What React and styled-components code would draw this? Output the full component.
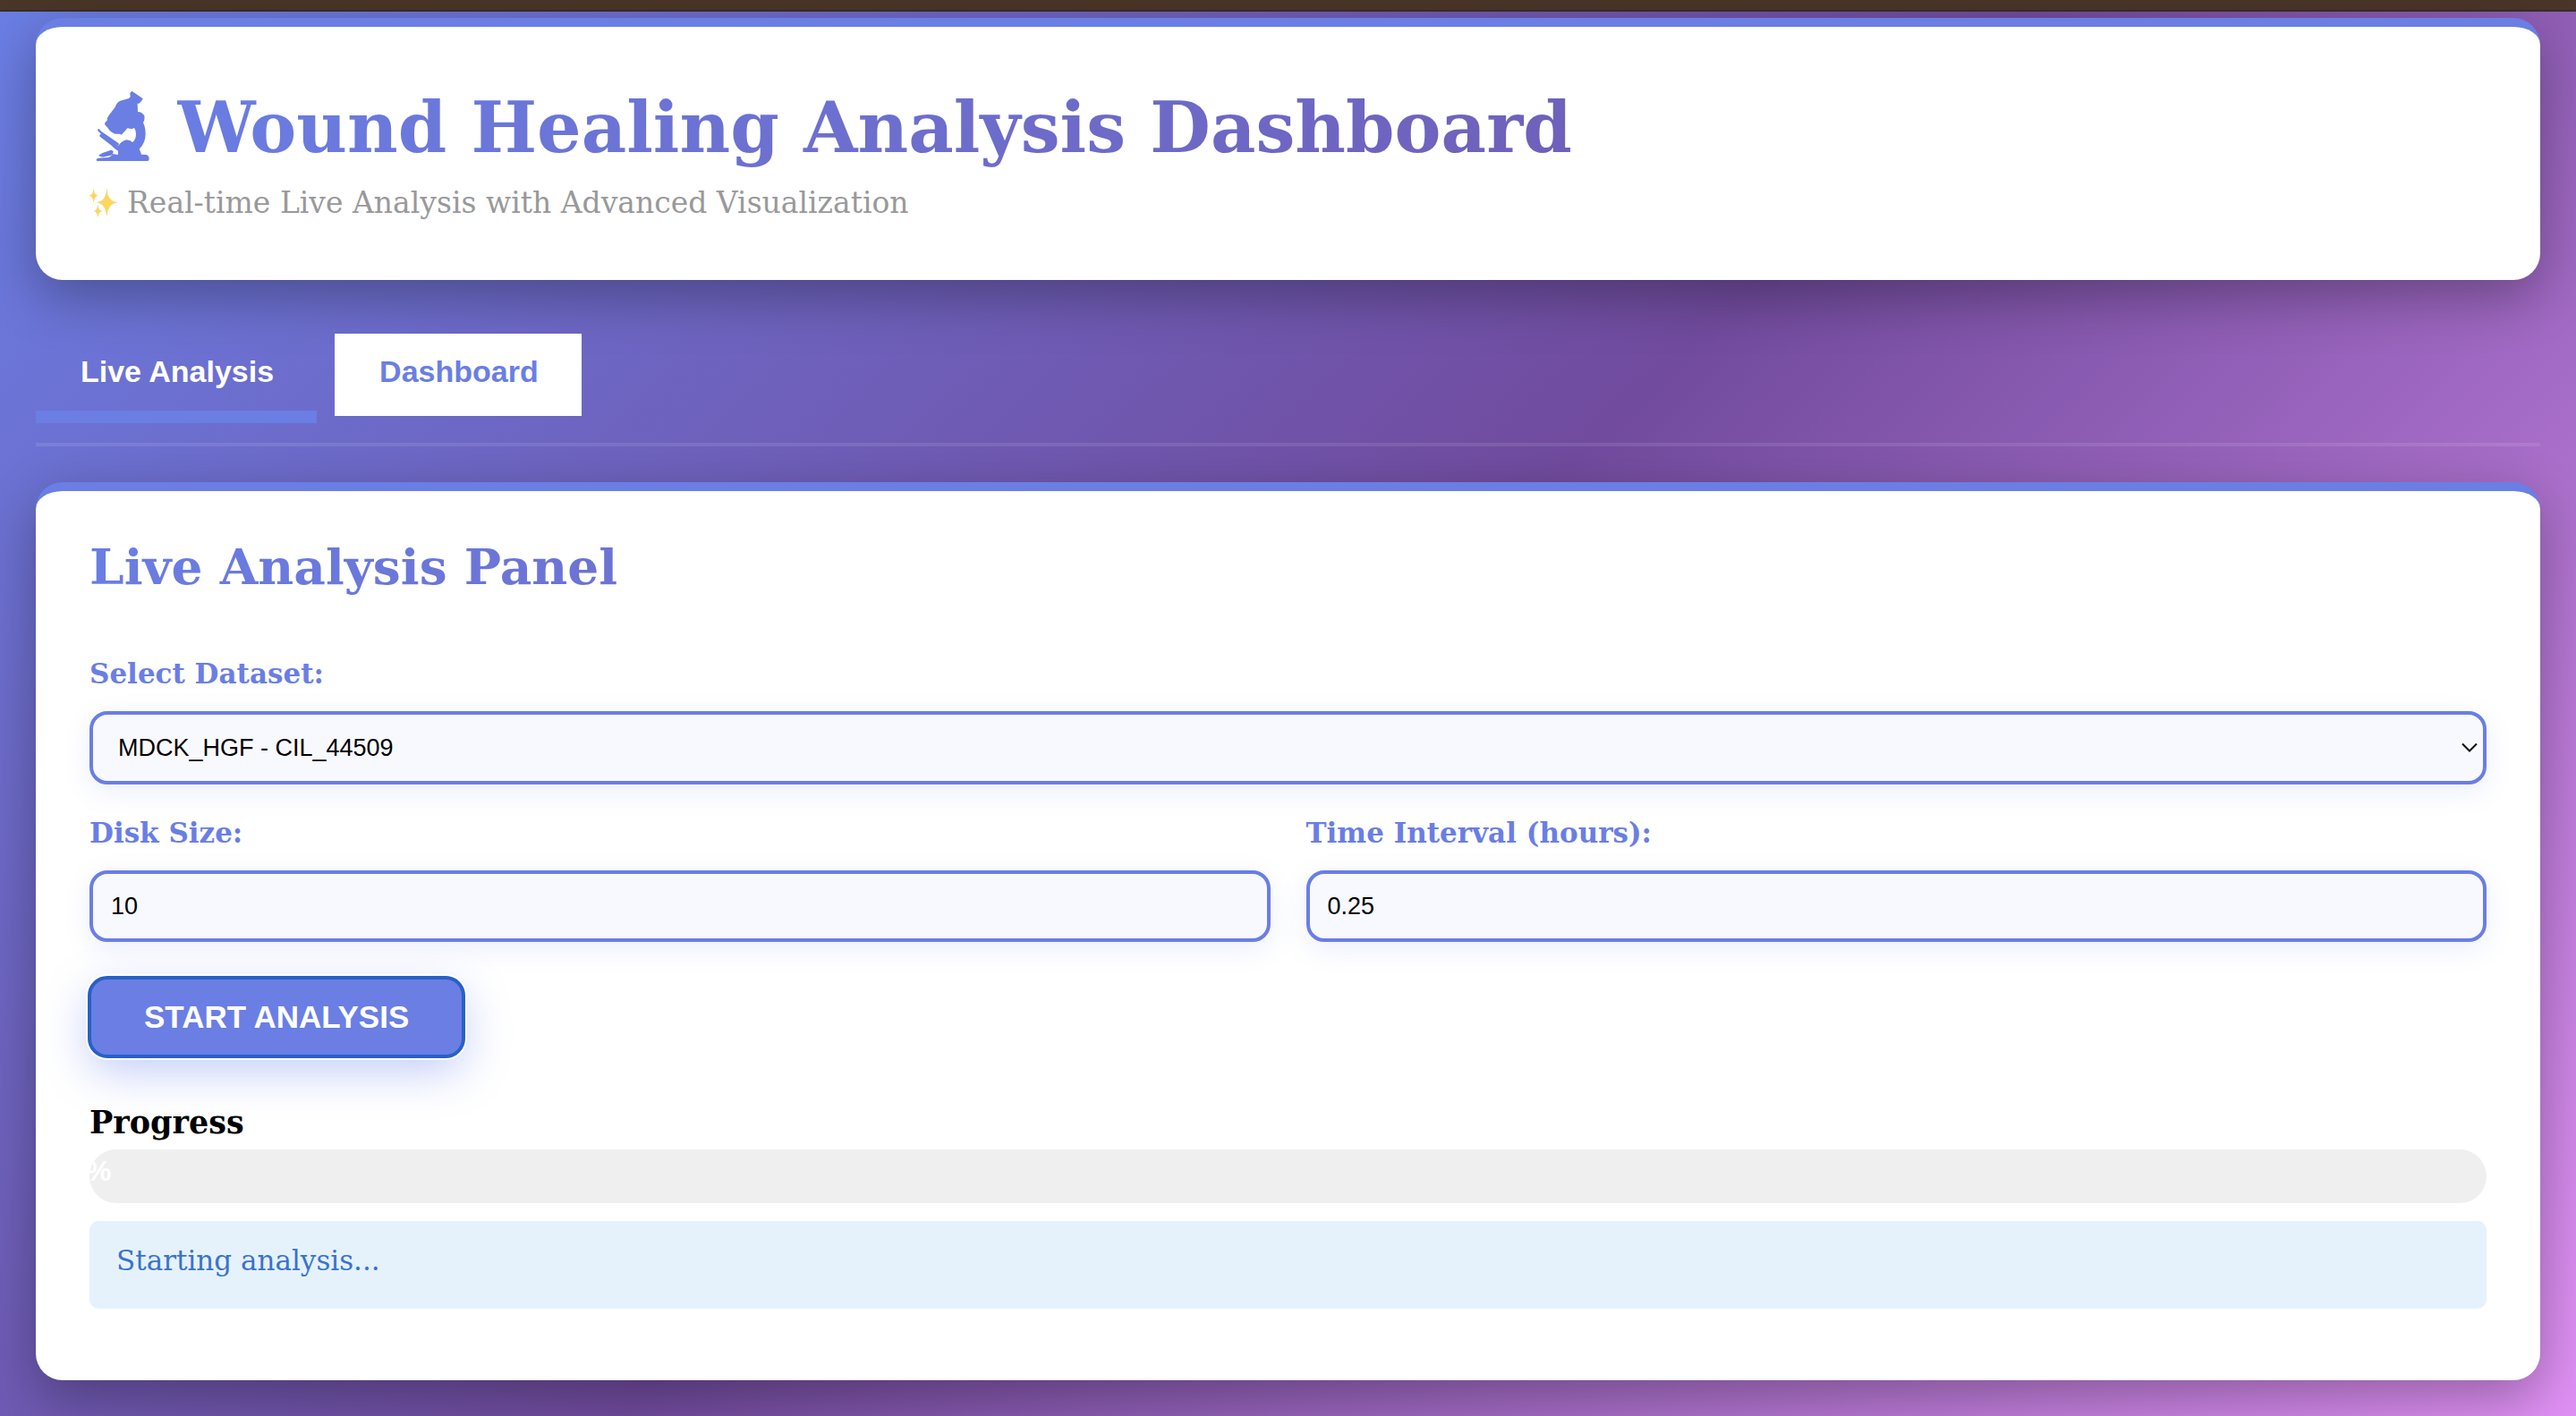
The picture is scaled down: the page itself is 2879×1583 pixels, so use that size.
import React, { useState } from "react";
import styled, { createGlobalStyle } from "styled-components";

const slab = `"Rockwell", "DejaVu Serif", serif`;
const sans = `"Liberation Sans", Arial, sans-serif`;
const accent = "#6a7ee4";
const brandGradient = `linear-gradient(135deg, ${accent} 0%, #724d9f 100%)`;

const GlobalStyle = createGlobalStyle`
  *, *::before, *::after { box-sizing: border-box; }
  html { min-height: 100%; }
  body {
    margin: 0;
    min-height: 100vh;
    font-family: ${slab};
    background: linear-gradient(135deg, ${accent} 0%, #714b9e 51%, #e594f8 102%);
  }
  h1, h2, h3, p { margin: 0; }
`;

const TopStrip = styled.div`
  height: 13px;
  background: #4a3628;
  border-bottom: 2px solid #3a2c28;
`;

const Page = styled.main`
  padding: 7px 40px 40px;
`;

const Card = styled.section`
  padding: 50px 60px 60px;
  background: #fff;
  border-top: 10px solid ${accent};
  border-radius: 30px;
  box-shadow: 0 20px 60px rgba(0, 0, 0, 0.3);
`;

const GradientText = styled.span`
  flex: 1;
  background: ${brandGradient};
  background-clip: text;
  -webkit-background-clip: text;
  color: transparent;
`;

const Title = styled.h1`
  display: flex;
  align-items: center;
  gap: 30px;
  padding-left: 6px;
  font-size: 78px;
  line-height: 126px;
  font-weight: 700;
`;

const Subtitle = styled.p`
  display: flex;
  align-items: center;
  gap: 10px;
  margin-bottom: 5px;
  font-size: 33px;
  line-height: 42px;
  color: #999;
`;

const Tabs = styled.nav`
  display: flex;
  align-items: flex-start;
  gap: 20px;
  margin: 60px 0 40px;
  padding-bottom: 22px;
  border-bottom: 4px solid rgba(255, 255, 255, 0.1);
`;

const Tab = styled.button`
  padding: 21px 48px 23px 50px;
  border: 0;
  border-bottom: ${(p) => (p.$active ? `14px solid ${accent}` : "6px solid #fff")};
  background: ${(p) => (p.$active ? "transparent" : "#fff")};
  color: ${(p) => (p.$active ? "#fff" : accent)};
  font-family: ${sans};
  font-size: 34px;
  line-height: 42px;
  font-weight: 700;
  cursor: pointer;
`;

const PanelTitle = styled.h2`
  display: flex;
  margin-bottom: 66px;
  font-size: 55px;
  line-height: 70px;
  font-weight: 700;
`;

const Fields = styled.form`
  display: grid;
  grid-template-columns: 1fr 1fr;
  gap: 36px 40px;
`;

const Field = styled.div`
  display: grid;
  gap: 24px;
  grid-column: ${(p) => (p.$wide ? "1 / -1" : "auto")};
`;

const Label = styled.label`
  color: ${accent};
  font-size: 31px;
  line-height: 36px;
  font-weight: 700;
`;

const control = `
  width: 100%;
  border: 4px solid ${accent};
  border-radius: 20px;
  background: #f8f9ff;
  box-shadow: 0 8px 30px rgba(102, 126, 234, 0.12);
  color: #000;
  font-family: ${sans};
  font-size: 27px;
  outline: none;
`;

const Input = styled.input`
  ${control}
  height: 80px;
  padding: 0 20px;
`;

const SelectBox = styled.div`
  display: grid;
  grid-template-columns: 1fr 16px;
  align-items: center;
  select {
    grid-area: 1 / 1 / 2 / 3;
  }
  svg {
    grid-area: 1 / 2 / 2 / 3;
    justify-self: end;
    margin-right: 10px;
    pointer-events: none;
    z-index: 1;
  }
`;

const Select = styled.select`
  ${control}
  appearance: none;
  height: 82px;
  padding: 0 28px;
`;

const StartButton = styled.button`
  justify-self: start;
  height: 88px;
  margin-top: 4px;
  padding: 0 61px;
  border: 0;
  border-radius: 20px;
  background: ${accent};
  outline: 4px solid #2860c8;
  outline-offset: -2px;
  box-shadow: 0 0 0 4px #fff, 0 16px 50px rgba(102, 126, 234, 0.4);
  color: #fff;
  font-family: ${sans};
  font-size: 35px;
  font-weight: 700;
  cursor: pointer;
`;

const ProgressTitle = styled.h3`
  margin: 52px 0 8px;
  color: #000;
  font-size: 35px;
  line-height: 44px;
  font-weight: 700;
`;

const Track = styled.div`
  display: flex;
  height: 60px;
  border-radius: 30px;
  background: #efefef;
`;

const Fill = styled.div`
  width: 0;
  margin-left: -4px;
  color: #fff;
  font-family: ${sans};
  font-size: 32px;
  line-height: 48px;
  font-weight: 700;
`;

const Status = styled.div`
  margin: 20px 0;
  padding: 24px 30px 34px;
  border-radius: 10px;
  background: #e5f2fc;
  color: #3a73cc;
  font-size: 31px;
  line-height: 40px;
`;

function Microscope() {
  return (
    <svg width="62" height="84" viewBox="82 60 186 252" fill={accent} aria-hidden="true">
      <path d="M206 62 L243 88 Q240 98 230 104 L225 104 L226 132 Q240 132 248 145 Q250 160 244 168 Q252 184 252 208 Q251 238 231 257 Q236 266 238 275 L255 276 Q264 280 264 290 Q264 297 258 297 L90 297 Q84 294 90 289 Q100 286 128 285 L142 277 L114 283 Q94 284 96 277 L108 270 L136 260 Q146 262 144 268 L141 273 L160 276 L160 263 Q148 256 138 245 L99 215 Q96 209 103 206 L93 197 Q89 190 96 189 L103 197 L162 238 Q164 246 160 245 L148 238 L161 247 Q170 230 188 226 Q204 228 208 235 Q220 224 220 206 Q219 192 214 186 L206 190 L191 187 L181 199 L171 209 L166 206 L150 206 Q134 202 124 184 Q112 174 116 169 L124 160 Q122 152 129 144 L150 116 Q156 100 167 95 L196 87 L201 82 L200 69 Z" />
    </svg>
  );
}

function Sparkles() {
  return (
    <svg width="32" height="32" viewBox="0 0 96 96" fill="#fbd75a" stroke="#f6bd6a" strokeWidth="1" aria-hidden="true">
      <path d="M58 3 Q61 42 92 46 Q62 50 58 90 Q54 50 26 46 Q55 42 58 3 Z" />
      <path d="M14 3 Q16 20 27 23 Q16 26 14 44 Q12 26 1 23 Q12 20 14 3 Z" />
      <path d="M28 56 Q30 72 41 75 Q30 78 28 94 Q26 78 16 75 Q26 72 28 56 Z" />
    </svg>
  );
}

export default function App() {
  const [tab, setTab] = useState("live");
  return (
    <>
      <GlobalStyle />
      <TopStrip />
      <Page>
        <Card as="header">
          <Title>
            <Microscope />
            <GradientText>Wound Healing Analysis Dashboard</GradientText>
          </Title>
          <Subtitle>
            <Sparkles />
            Real-time Live Analysis with Advanced Visualization
          </Subtitle>
        </Card>

        <Tabs>
          <Tab type="button" $active={tab === "live"} onClick={() => setTab("live")}>
            Live Analysis
          </Tab>
          <Tab type="button" $active={tab === "dashboard"} onClick={() => setTab("dashboard")}>
            Dashboard
          </Tab>
        </Tabs>

        <Card>
          <PanelTitle>
            <GradientText>Live Analysis Panel</GradientText>
          </PanelTitle>
          <Fields onSubmit={(e) => e.preventDefault()}>
            <Field $wide>
              <Label htmlFor="dataset">Select Dataset:</Label>
              <SelectBox>
                <Select id="dataset" defaultValue="44509">
                  <option value="44509">MDCK_HGF - CIL_44509</option>
                </Select>
                <svg width="18" height="12" viewBox="0 0 18 12" fill="none" stroke="#111" strokeWidth="2">
                  <path d="M1 1.5 L9 9.5 L17 1.5" />
                </svg>
              </SelectBox>
            </Field>
            <Field>
              <Label htmlFor="disk">Disk Size:</Label>
              <Input id="disk" defaultValue="10" />
            </Field>
            <Field>
              <Label htmlFor="interval">Time Interval (hours):</Label>
              <Input id="interval" defaultValue="0.25" />
            </Field>
            <StartButton type="submit">START ANALYSIS</StartButton>
          </Fields>
          <ProgressTitle>Progress</ProgressTitle>
          <Track>
            <Fill>%</Fill>
          </Track>
          <Status role="status">Starting analysis...</Status>
        </Card>
      </Page>
    </>
  );
}
